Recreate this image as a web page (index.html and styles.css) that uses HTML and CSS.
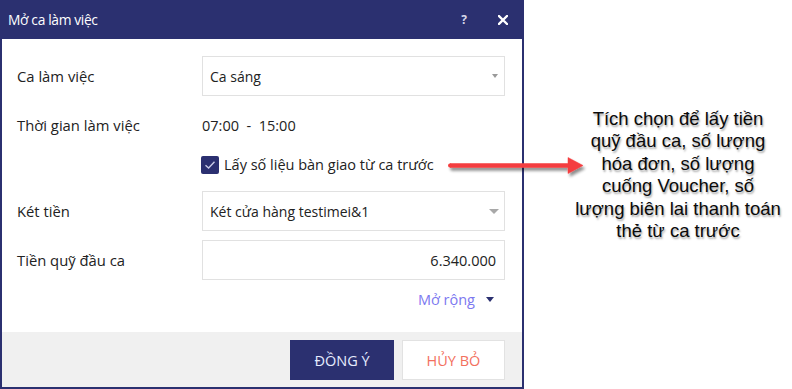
FILE: index.html
```html
<!DOCTYPE html>
<html lang="vi">
<head>
<meta charset="utf-8">
<title>Mở ca làm việc</title>
<link rel="stylesheet" href="styles.css">
</head>
<body>
<div class="page">
  <div class="dialog">
    <div class="titlebar">
      <span class="title">Mở ca làm việc</span>
      <span class="help">?</span>
      <svg class="close" width="10" height="10" viewBox="0 0 10 10"><path d="M1 1 L9 9 M9 1 L1 9" stroke="#fff" stroke-width="2.3" stroke-linecap="square"/></svg>
    </div>
    <div class="body">
      <div class="row r1">
        <div class="label">Ca làm việc</div>
        <div class="field select"><span>Ca sáng</span><i class="caret small"></i></div>
      </div>
      <div class="row r2">
        <div class="label">Thời gian làm việc</div>
        <div class="value">07:00&nbsp; - &nbsp;15:00</div>
      </div>
      <div class="row r3">
        <div class="label"></div>
        <label class="check">
          <span class="box"><svg width="12" height="10" viewBox="0 0 12 10"><path d="M1.5 5.2 L4.6 8 L10.5 1.8" fill="none" stroke="#c9cbe6" stroke-width="1.4"/></svg></span>
          <span>Lấy số liệu bàn giao từ ca trước</span>
        </label>
      </div>
      <div class="row r4">
        <div class="label">Két tiền</div>
        <div class="field select"><span>Két cửa hàng testimei&amp;1</span><i class="caret"></i></div>
      </div>
      <div class="row r5">
        <div class="label">Tiền quỹ đầu ca</div>
        <div class="field input">6.340.000</div>
      </div>
      <div class="row r6">
        <span class="more">Mở rộng</span><i class="caret dark"></i>
      </div>
    </div>
    <div class="footer">
      <button class="btn ok">ĐỒNG Ý</button>
      <button class="btn cancel">HỦY BỎ</button>
    </div>
  </div>
  <div class="note">Tích chọn để lấy tiền<br>quỹ đầu ca, số lượng<br>hóa đơn, số lượng<br>cuống Voucher, số<br>lượng biên lai thanh toán<br>thẻ từ ca trước</div>
  <svg class="arrow" width="150" height="36" viewBox="0 0 150 36">
    <defs>
      <filter id="sh" x="-10%" y="-50%" width="120%" height="200%">
        <feGaussianBlur in="SourceAlpha" stdDeviation="1.6"/>
        <feOffset dx="2" dy="3" result="b"/>
        <feComponentTransfer><feFuncA type="linear" slope="0.45"/></feComponentTransfer>
        <feMerge><feMergeNode/><feMergeNode in="SourceGraphic"/></feMerge>
      </filter>
    </defs>
    <g filter="url(#sh)">
      <path d="M7 13.5 H125 V7.5 L140 15.5 L125 23.5 V17.5 H7 Z" fill="#f43d3f" stroke="#f43d3f" stroke-width="0.5" stroke-linejoin="round"/>
      <circle cx="7" cy="15.5" r="2" fill="#f43d3f"/>
    </g>
  </svg>
</div>
</body>
</html>
```

FILE: styles.css
```css
* { box-sizing: border-box; }
html, body { margin: 0; padding: 0; background: #fff; }
body { font-family: "Open Sans", "Noto Sans", sans-serif; color: #222; }
.page { position: relative; width: 792px; height: 389px; display: flex; }

.dialog {
  width: 524px; height: 389px;
  border: 2px solid #2b3070; border-top: 0;
  display: flex; flex-direction: column;
  background: #fff;
}
.titlebar {
  height: 39px; flex: none; margin: 0 -2px; padding: 0 0 0 8px;
  background: #2b3070; color: #fff;
  display: flex; align-items: center;
}
.title { font-size: 13.8px; flex: 1; letter-spacing: -0.35px; }
.help { font-size: 12px; font-weight: bold; color: #d8d9ea; margin-right: 31px; }
.close { margin-right: 16px; }

.body { flex: 1; padding: 17px 17px 0 15px; display: flex; flex-direction: column; }
.row { display: flex; align-items: center; flex: none; }
.label { width: 185px; flex: none; font-size: 14.8px; }
.r1 { height: 40px; }
.r2 { height: 40px; margin-top: 9px; }
.r3 { height: 28px; margin-top: 10px; align-items: flex-start; }
.r4 { height: 40px; margin-top: 8px; }
.r5 { height: 40px; margin-top: 9px; }
.r6 { height: 20px; margin-top: 9px; justify-content: flex-end; padding-right: 11px; }

.field {
  width: 303px; height: 40px; border: 1px solid #e1e1e1;
  display: flex; align-items: center; font-size: 14px; padding: 0 5px 0 7px;
}
.select { justify-content: space-between; }
.input { justify-content: flex-end; padding-right: 8px; font-size: 14.5px; }
.value { font-size: 14.5px; }

.caret { width: 0; height: 0; border-left: 5px solid transparent; border-right: 5px solid transparent; border-top: 5px solid #a8a8a8; }
.caret.small { border-left-width: 3.5px; border-right-width: 3.5px; border-top-width: 4px; border-top-color: #9a9a9a; margin-right: 1px; }
.caret.dark { border-top-color: #2b3070; margin-left: 11px; border-left-width: 4.5px; border-right-width: 4.5px; border-top-width: 5px; }

.check { display: flex; align-items: center; gap: 5px; font-size: 14.5px; margin-left: -1px; }
.box {
  width: 18px; height: 18px; border-radius: 2px; background: #2b3070;
  display: flex; align-items: center; justify-content: center;
}
.more { color: #7c78f0; font-size: 14.5px; }

.footer {
  height: 55px; flex: none; background: #f0f0f0;
  display: flex; justify-content: flex-end; align-items: flex-start;
  padding: 8px 17px 0 0; gap: 8px;
}
.btn {
  height: 40px; font-family: "Open Sans", "Noto Sans", sans-serif; font-size: 14.5px;
  border: 0; padding: 0; cursor: pointer;
}
.ok { width: 104px; background: #2b3070; color: #e6ecff; }
.cancel { width: 103px; background: #fff; color: #f3705e; border: 1px solid #e2e2e2; }

.note {
  position: absolute; left: 548px; top: 108px; width: 260px;
  font-family: "Liberation Sans", Arial, sans-serif; font-size: 18.5px; line-height: 22.4px;
  text-align: center; color: #0a0a0a;
  text-shadow: 1px 2px 2px rgba(0,0,0,0.35);
}
.arrow { position: absolute; left: 443px; top: 150px; }
```
